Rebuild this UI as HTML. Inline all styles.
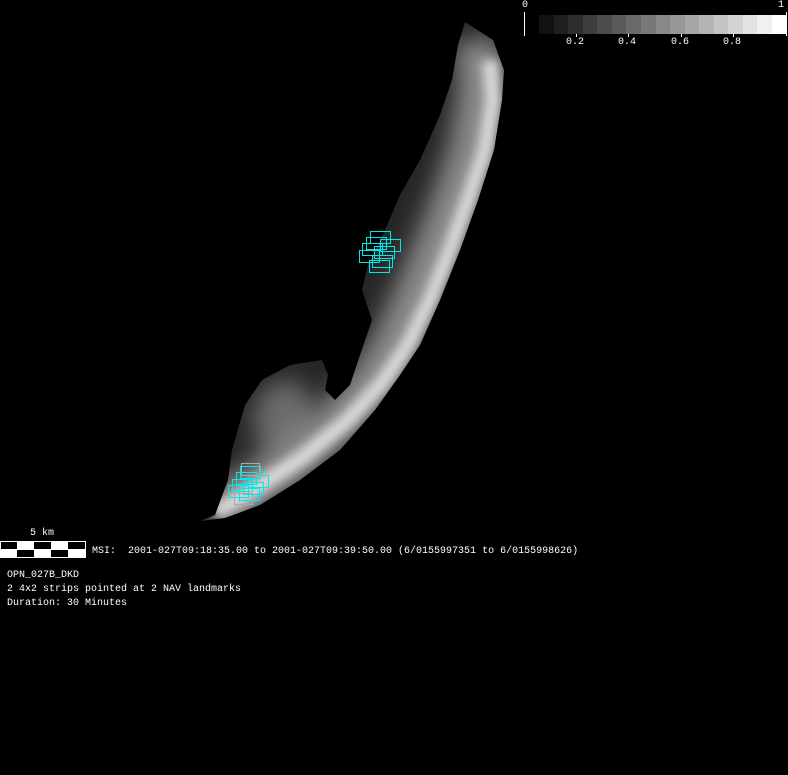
<!DOCTYPE html>
<html><head><meta charset="utf-8"><style>
html,body{margin:0;padding:0;background:#000;}
body{width:788px;height:775px;position:relative;overflow:hidden;font-family:"Liberation Mono","DejaVu Sans Mono",monospace;font-size:10px;color:#fff;}
.t{position:absolute;white-space:pre;line-height:12px;}
</style></head><body>
<svg width="788" height="775" style="position:absolute;left:0;top:0">
<defs>
<clipPath id="ast"><path d="M465,22 L493,40 L504,70 L502,100 L494,150 L478,200 L460,250 L440,300 L420,345 L400,375 L375,410 L340,450 L300,480 L260,505 L225,518 L200,521 L215,515 L228,480 L232,450 L245,405 L262,380 L290,365 L322,360 L328,375 L325,390 L335,400 L350,385 L360,355 L372,320 L362,290 L368,265 L385,230 L400,195 L420,160 L440,115 L452,80 L458,45 Z"/></clipPath>
<filter id="b1" x="-50%" y="-50%" width="200%" height="200%"><feGaussianBlur stdDeviation="12"/></filter>
<filter id="b2" x="-50%" y="-50%" width="200%" height="200%"><feGaussianBlur stdDeviation="5"/></filter>
</defs>
<g clip-path="url(#ast)">
<rect x="190" y="10" width="330" height="520" fill="#262626"/>
<ellipse cx="285" cy="420" rx="32" ry="40" fill="#6a6a6a" filter="url(#b1)"/>
<polyline points="478,40 482,90 472,150 455,200 436,250 415,300 395,345 370,385 335,425 295,460 255,488 215,510" fill="none" stroke="#8a8a8a" stroke-width="46" filter="url(#b1)"/>
<polyline points="490,60 493,100 485,150 468,200 450,250 430,300 408,345 383,382 348,420 303,457 258,487 215,513" fill="none" stroke="#d8d8d8" stroke-width="16" filter="url(#b2)"/>
</g>
<g fill="none" stroke="#00e8e8" stroke-width="1">
<rect x="370.5" y="231.5" width="20" height="12"/><rect x="366.5" y="237.5" width="20" height="12"/>
<rect x="380.5" y="239.5" width="20" height="12"/><rect x="362.5" y="243.5" width="20" height="12"/>
<rect x="374.5" y="246.5" width="20" height="12"/><rect x="359.5" y="250.5" width="20" height="12"/>
<rect x="372.5" y="255.5" width="20" height="12"/><rect x="369.5" y="260.5" width="20" height="12"/>
<rect x="240.5" y="466.5" width="20" height="12"/><rect x="236.5" y="472.5" width="20" height="12"/>
<rect x="248.5" y="475.5" width="20" height="12"/><rect x="232.5" y="479.5" width="20" height="12"/>
<rect x="243.5" y="482.5" width="20" height="12"/><rect x="228.5" y="485.5" width="20" height="12"/>
<rect x="239.5" y="488.5" width="20" height="12"/>
</g>
<g fill="none" stroke="#aaa" stroke-width="1">
<rect x="241.5" y="463.5" width="18" height="12"/><rect x="234.5" y="493.5" width="18" height="11"/>
</g>
<g>
<rect x="539" y="15" width="15" height="19" fill="#111"/><rect x="554" y="15" width="14" height="19" fill="#1f1f1f"/>
<rect x="568" y="15" width="15" height="19" fill="#2e2e2e"/><rect x="583" y="15" width="14" height="19" fill="#3d3d3d"/>
<rect x="597" y="15" width="15" height="19" fill="#4c4c4c"/><rect x="612" y="15" width="14" height="19" fill="#5a5a5a"/>
<rect x="626" y="15" width="15" height="19" fill="#6a6a6a"/><rect x="641" y="15" width="15" height="19" fill="#787878"/>
<rect x="656" y="15" width="14" height="19" fill="#888"/><rect x="670" y="15" width="15" height="19" fill="#979797"/>
<rect x="685" y="15" width="14" height="19" fill="#a6a6a6"/><rect x="699" y="15" width="15" height="19" fill="#b4b4b4"/>
<rect x="714" y="15" width="14" height="19" fill="#c4c4c4"/><rect x="728" y="15" width="15" height="19" fill="#d3d3d3"/>
<rect x="743" y="15" width="14" height="19" fill="#e2e2e2"/><rect x="757" y="15" width="15" height="19" fill="#f0f0f0"/>
<rect x="772" y="15" width="15" height="19" fill="#fff"/>
</g>
<g fill="#fff">
<rect x="524" y="12" width="1" height="24"/><rect x="786" y="12" width="1" height="24"/>
<rect x="576" y="34" width="1" height="3"/><rect x="628" y="34" width="1" height="3"/>
<rect x="681" y="34" width="1" height="3"/><rect x="733" y="34" width="1" height="3"/>
</g>
<rect x="0" y="541" width="86" height="17" fill="#fff"/>
<g fill="#000">
<rect x="1" y="542" width="16" height="7"/><rect x="34" y="542" width="17" height="7"/><rect x="68" y="542" width="17" height="7"/>
<rect x="17" y="550" width="17" height="7"/><rect x="51" y="550" width="17" height="7"/>
</g>
</svg>
<div class="t" style="left:522px;top:0px">0</div>
<div class="t" style="left:778px;top:0px">1</div>
<div class="t" style="left:566px;top:37px">0.2</div>
<div class="t" style="left:618px;top:37px">0.4</div>
<div class="t" style="left:671px;top:37px">0.6</div>
<div class="t" style="left:723px;top:37px">0.8</div>
<div class="t" style="left:30px;top:528px">5 km</div>
<div class="t" style="left:92px;top:546px">MSI:  2001-027T09:18:35.00 to 2001-027T09:39:50.00 (6/0155997351 to 6/0155998626)</div>
<div class="t" style="left:7px;top:570px">OPN_027B_DKD</div>
<div class="t" style="left:7px;top:584px">2 4x2 strips pointed at 2 NAV landmarks</div>
<div class="t" style="left:7px;top:598px">Duration: 30 Minutes</div>
</body></html>
